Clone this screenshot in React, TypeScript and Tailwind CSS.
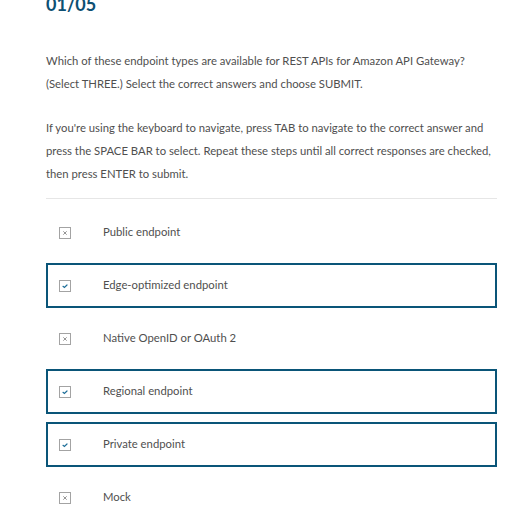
import React from 'react';

const OPTIONS: { label: string; checked: boolean }[] = [
  { label: 'Public endpoint', checked: false },
  { label: 'Edge-optimized endpoint', checked: true },
  { label: 'Native OpenID or OAuth 2', checked: false },
  { label: 'Regional endpoint', checked: true },
  { label: 'Private endpoint', checked: true },
  { label: 'Mock', checked: false },
];

function Box({ checked }: { checked: boolean }) {
  return (
    <span className="w-[12px] h-[12px] border border-[#a3a3a3] bg-white flex items-center justify-center shrink-0">
      {checked ? (
        <svg width="8" height="8" viewBox="0 0 8 8" fill="none" stroke="#1f6f99" strokeWidth="1.2" strokeLinecap="round">
          <path d="M2 4.3 3.4 5.5 6 3" />
        </svg>
      ) : (
        <svg width="8" height="8" viewBox="0 0 8 8" fill="none" stroke="#8a8a8a" strokeWidth="0.9">
          <path d="M2.3 2.3 5.7 5.7M5.7 2.3 2.3 5.7" />
        </svg>
      )}
    </span>
  );
}

export default function App() {
  return (
    <div className="w-[514px] h-[529px] bg-white overflow-hidden font-['Lato',sans-serif] text-[#4f4f4f]">
      <div className="pl-[46px] w-[497px]">
        <h1 className="text-[18px] font-bold leading-none text-[#0d5073] mt-[-5px]">01/05</h1>

        <div className="mt-[36px] text-[11.3px] leading-[23px]">
          <p>Which of these endpoint types are available for REST APIs for Amazon API Gateway? (Select THREE.) Select the correct answers and choose SUBMIT.</p>
          <p className="mt-[21px]">
            If you're using the keyboard to navigate, press TAB to navigate to the correct answer and press the SPACE BAR to select. Repeat these steps until all correct responses are checked, then press ENTER to submit.
          </p>
        </div>

        <div className="mt-[13px] border-t border-[#e6e6e6]" />

        <div className="mt-[11px] flex flex-col gap-[8px]">
          {OPTIONS.map((o) => (
            <div
              key={o.label}
              className={`h-[45px] flex items-center pl-[11px] border-2 ${o.checked ? 'border-[#0a5578]' : 'border-transparent'}`}
            >
              <Box checked={o.checked} />
              <span className="ml-[32px] text-[11.3px]">{o.label}</span>
            </div>
          ))}
        </div>
      </div>
    </div>
  );
}
